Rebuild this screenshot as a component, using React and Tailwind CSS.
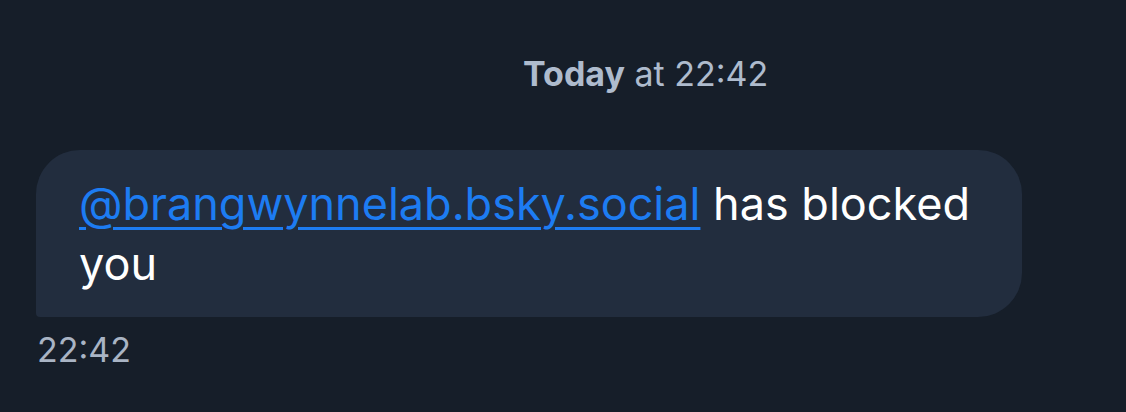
import React from "react";

const App = () => {
  return (
    <div
      className="w-[1126px] h-[412px] bg-[#161e29] overflow-hidden flex flex-col"
      style={{ fontFamily: "Inter, 'Noto Sans', sans-serif" }}
    >
      {/* date header */}
      <div className="pt-[54px] pl-[523px] text-[34px] leading-[40px] text-[#aebbcd]">
        <span className="font-bold">Today</span> at 22:42
      </div>

      {/* message */}
      <div className="mt-[56px] pl-[36px] flex flex-col items-start">
        <div className="w-[986px] bg-[#222d3e] rounded-[44px] rounded-bl-[4px] pl-[43px] pr-[40px] pt-[24px] pb-[23px] text-[45px] leading-[60px] text-white">
          <a href="#" className="text-[#1d7cf2] underline underline-offset-[7px] decoration-[3px]">
            @brangwynnelab.bsky.social
          </a>{" "}
          has blocked you
        </div>
        <p className="mt-[13px] pl-[1px] text-[34px] leading-[40px] text-[#a9b4c4]">22:42</p>
      </div>
    </div>
  );
};

export default App;
